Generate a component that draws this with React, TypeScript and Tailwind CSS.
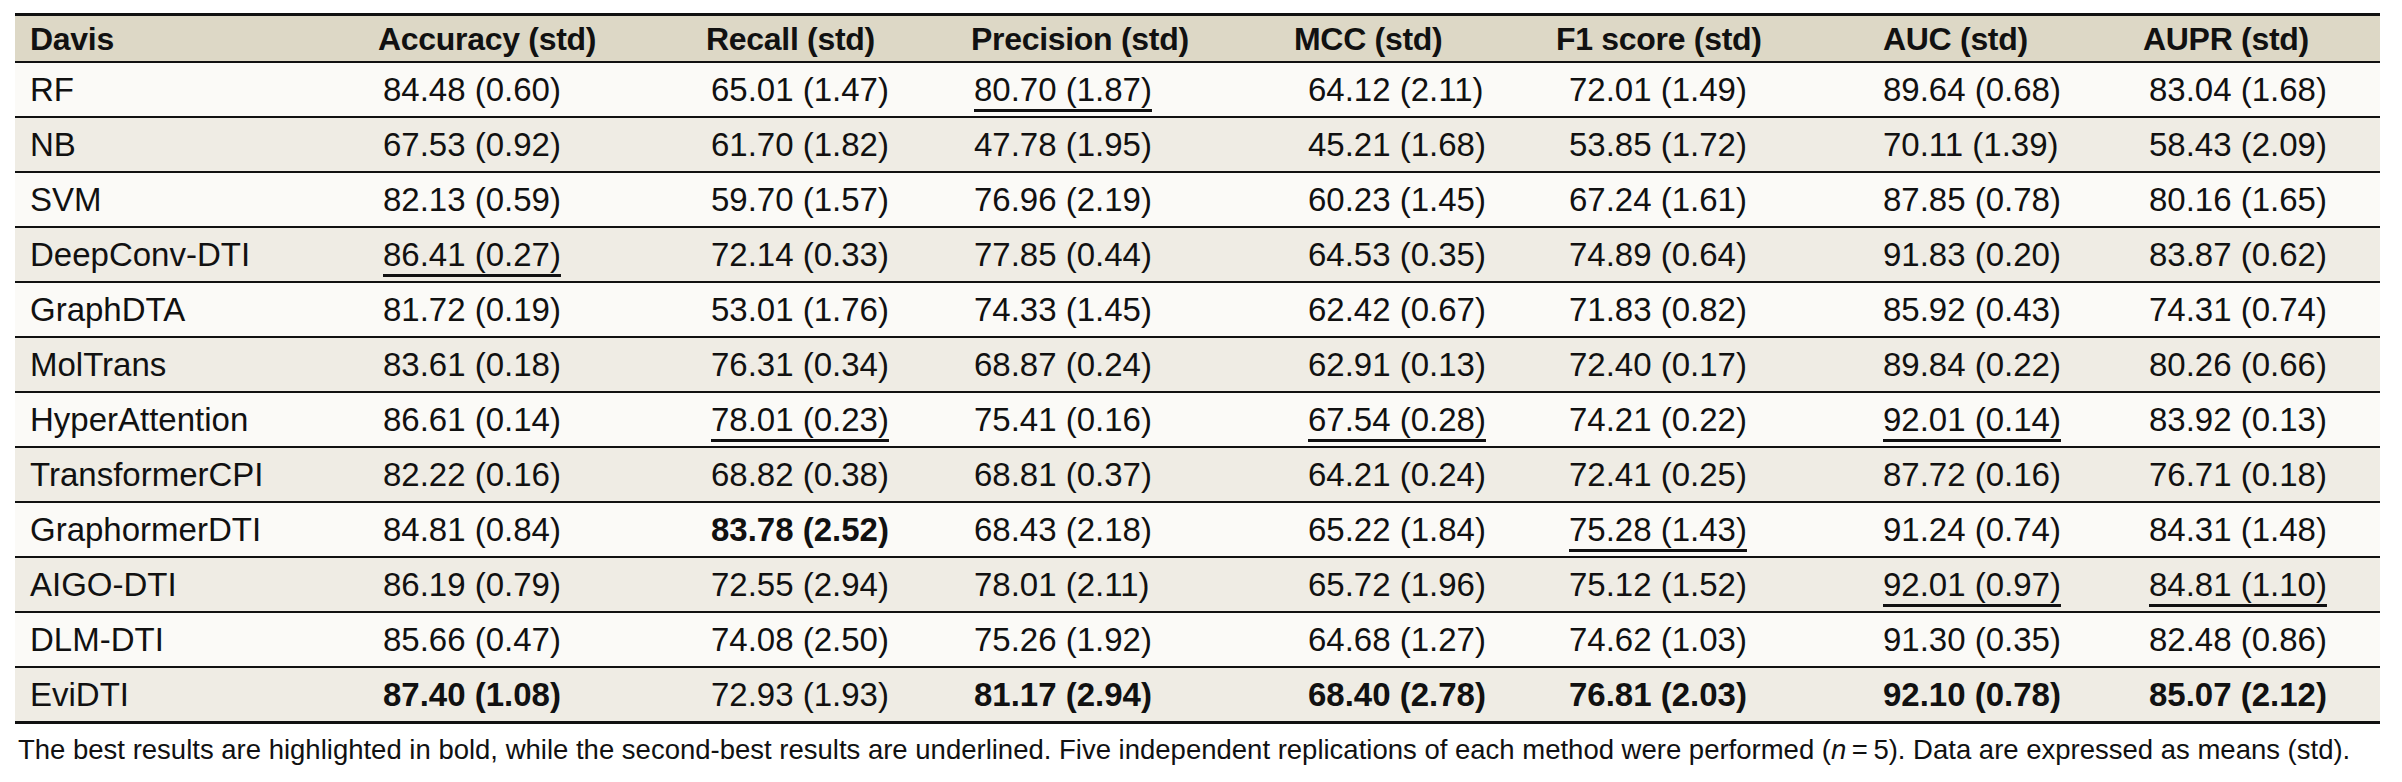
import React from "react";

type Cell = { v: string; b?: boolean; u?: boolean };

const headers = [
  "Davis",
  "Accuracy (std)",
  "Recall (std)",
  "Precision (std)",
  "MCC (std)",
  "F1 score (std)",
  "AUC (std)",
  "AUPR (std)",
];

const c = (v: string, f?: "b" | "u"): Cell => ({ v, b: f === "b", u: f === "u" });

const rows: { name: string; cells: Cell[] }[] = [
  { name: "RF", cells: [c("84.48 (0.60)"), c("65.01 (1.47)"), c("80.70 (1.87)", "u"), c("64.12 (2.11)"), c("72.01 (1.49)"), c("89.64 (0.68)"), c("83.04 (1.68)")] },
  { name: "NB", cells: [c("67.53 (0.92)"), c("61.70 (1.82)"), c("47.78 (1.95)"), c("45.21 (1.68)"), c("53.85 (1.72)"), c("70.11 (1.39)"), c("58.43 (2.09)")] },
  { name: "SVM", cells: [c("82.13 (0.59)"), c("59.70 (1.57)"), c("76.96 (2.19)"), c("60.23 (1.45)"), c("67.24 (1.61)"), c("87.85 (0.78)"), c("80.16 (1.65)")] },
  { name: "DeepConv-DTI", cells: [c("86.41 (0.27)", "u"), c("72.14 (0.33)"), c("77.85 (0.44)"), c("64.53 (0.35)"), c("74.89 (0.64)"), c("91.83 (0.20)"), c("83.87 (0.62)")] },
  { name: "GraphDTA", cells: [c("81.72 (0.19)"), c("53.01 (1.76)"), c("74.33 (1.45)"), c("62.42 (0.67)"), c("71.83 (0.82)"), c("85.92 (0.43)"), c("74.31 (0.74)")] },
  { name: "MolTrans", cells: [c("83.61 (0.18)"), c("76.31 (0.34)"), c("68.87 (0.24)"), c("62.91 (0.13)"), c("72.40 (0.17)"), c("89.84 (0.22)"), c("80.26 (0.66)")] },
  { name: "HyperAttention", cells: [c("86.61 (0.14)"), c("78.01 (0.23)", "u"), c("75.41 (0.16)"), c("67.54 (0.28)", "u"), c("74.21 (0.22)"), c("92.01 (0.14)", "u"), c("83.92 (0.13)")] },
  { name: "TransformerCPI", cells: [c("82.22 (0.16)"), c("68.82 (0.38)"), c("68.81 (0.37)"), c("64.21 (0.24)"), c("72.41 (0.25)"), c("87.72 (0.16)"), c("76.71 (0.18)")] },
  { name: "GraphormerDTI", cells: [c("84.81 (0.84)"), c("83.78 (2.52)", "b"), c("68.43 (2.18)"), c("65.22 (1.84)"), c("75.28 (1.43)", "u"), c("91.24 (0.74)"), c("84.31 (1.48)")] },
  { name: "AIGO-DTI", cells: [c("86.19 (0.79)"), c("72.55 (2.94)"), c("78.01 (2.11)"), c("65.72 (1.96)"), c("75.12 (1.52)"), c("92.01 (0.97)", "u"), c("84.81 (1.10)", "u")] },
  { name: "DLM-DTI", cells: [c("85.66 (0.47)"), c("74.08 (2.50)"), c("75.26 (1.92)"), c("64.68 (1.27)"), c("74.62 (1.03)"), c("91.30 (0.35)"), c("82.48 (0.86)")] },
  { name: "EviDTI", cells: [c("87.40 (1.08)", "b"), c("72.93 (1.93)"), c("81.17 (2.94)", "b"), c("68.40 (2.78)", "b"), c("76.81 (2.03)", "b"), c("92.10 (0.78)", "b"), c("85.07 (2.12)", "b")] },
];

const valPad = ["pl-[15px]", "pl-[8px]", "pl-[8px]", "pl-[8px]", "pl-[18px]", "pl-[17px]", "pl-[8px]", "pl-[10px]"];
const headPad = ["pl-[15px]", "pl-[3px]", "pl-[3px]", "pl-[5px]", "pl-[4px]", "pl-[4px]", "pl-[8px]", "pl-[4px]"];

const gridCols = "grid grid-cols-[360px_328px_263px_324px_262px_323px_264px_241px]";

export default function App() {
  return (
    <div className="w-[2402px] h-[782px] bg-white pl-[15px] pt-[13px] font-['Liberation_Sans',Arial,sans-serif] text-[#111111]">
      <div className="w-[2365px] border-t-[3px] border-b-[3px] border-[#111111]">
        <div className={`${gridCols} h-[45px] bg-[#ddd8c6] items-center`}>
          {headers.map((h, i) => (
            <div key={h} className={`${headPad[i]} text-[32px] leading-[36px] font-bold whitespace-nowrap tracking-[-0.3px]`}>
              {h}
            </div>
          ))}
        </div>
        {rows.map((r, ri) => (
          <div
            key={r.name}
            className={`${gridCols} h-[55px] border-t-2 border-[#111111] items-center ${
              ri % 2 === 0 ? "bg-[#fbfaf7]" : "bg-[#efece4]"
            }`}
          >
            <div className={`${valPad[0]} text-[33px] leading-[38px] whitespace-nowrap`}>{r.name}</div>
            {r.cells.map((cell, ci) => (
              <div key={ci} className={`${valPad[ci + 1]} text-[33px] leading-[38px] whitespace-nowrap`}>
                <span
                  className={`${cell.b ? "font-bold" : ""} ${
                    cell.u ? "underline decoration-[3px] underline-offset-[8px] decoration-[#111111]" : ""
                  }`}
                >
                  {cell.v}
                </span>
              </div>
            ))}
          </div>
        ))}
      </div>
      <p className="mt-[10px] pl-[3px] text-[27.5px] leading-[32px] whitespace-nowrap">
        The best results are highlighted in bold, while the second-best results are underlined. Five independent
        replications of each method were performed (<i>n</i>{"\u2009=\u2009"}5). Data are expressed as means (std).
      </p>
    </div>
  );
}
